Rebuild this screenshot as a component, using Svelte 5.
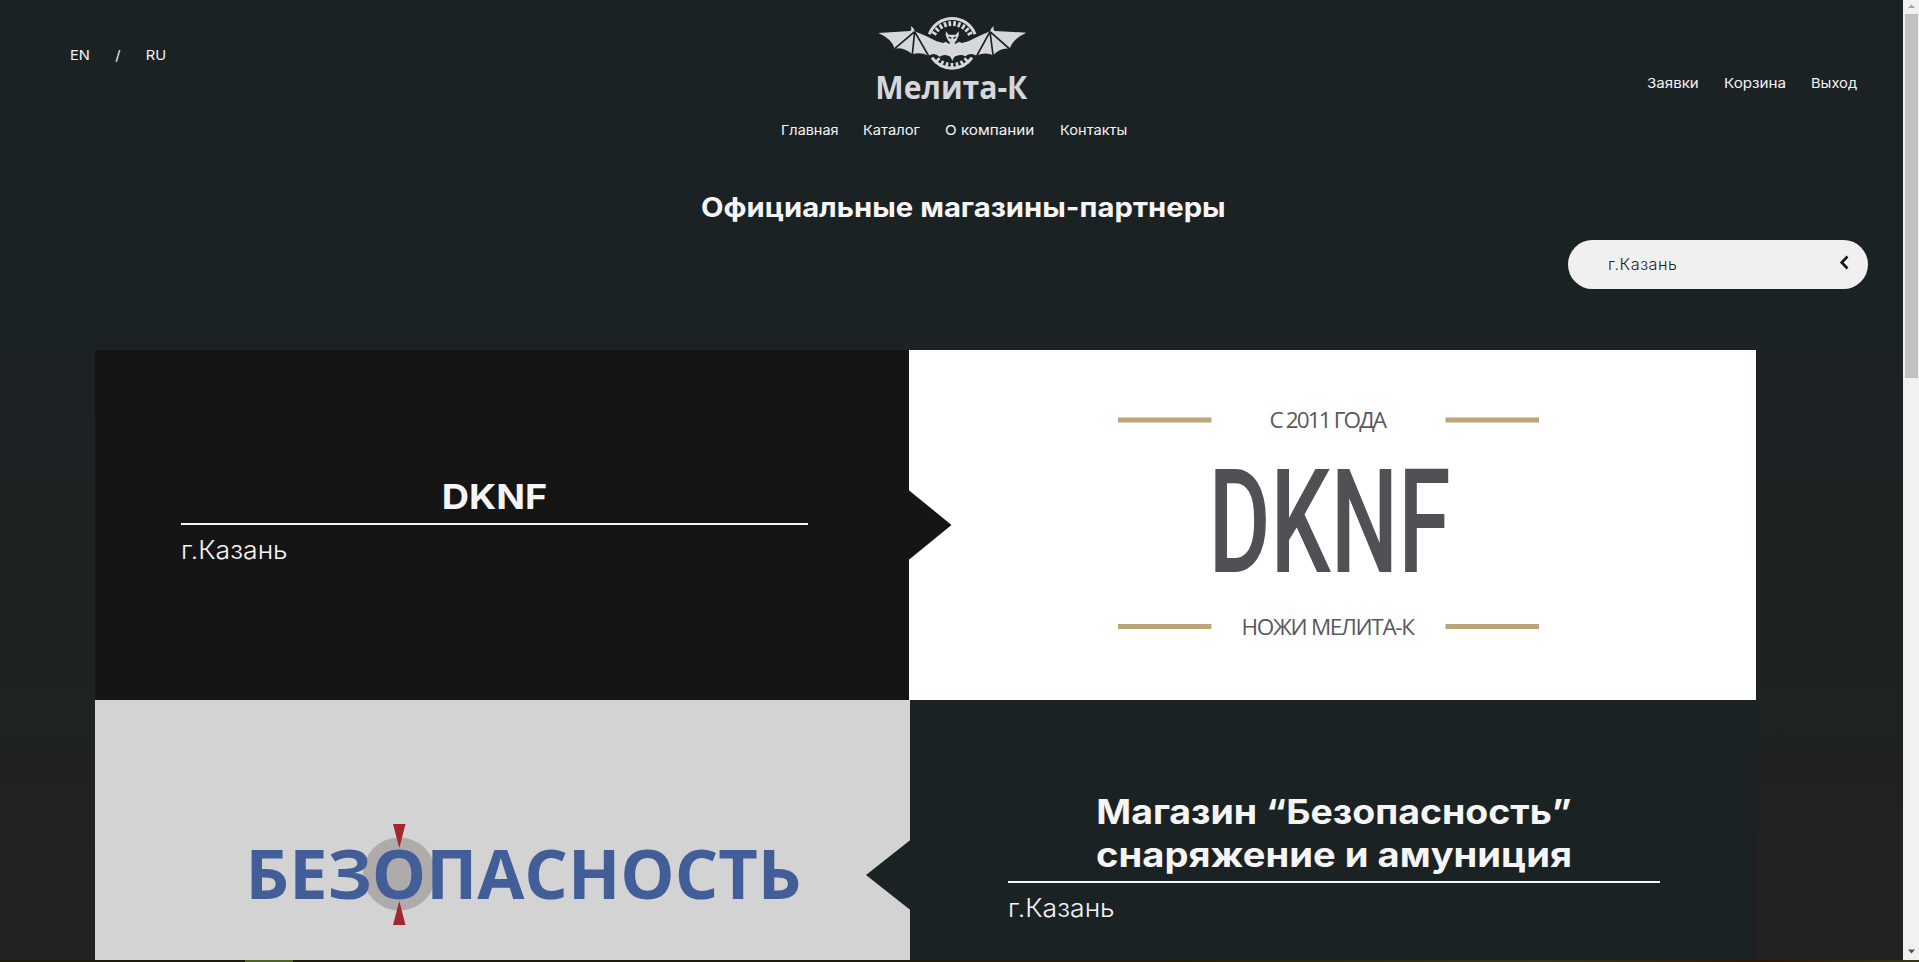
<script>
  const pages = [
    { label: 'Главная', w: 57, s: 1.06 },
    { label: 'Каталог', w: 56, s: 1.08 },
    { label: 'О компании', w: 89.5, s: 1.12 },
    { label: 'Контакты', w: 68, s: 1.075 }
  ];
  const account = [
    { label: 'Заявки', w: 52, s: 1.11 },
    { label: 'Корзина', w: 62.5, s: 1.12 },
    { label: 'Выход', w: 46, s: 1.08 }
  ];
  const teeth = [-62, -49, -36, -23, -10, 3, 16, 29, 42, 55];
</script>

<div class="page">
  <header>
    <div class="lang"><span>EN</span><span>/</span><span>RU</span></div>
    <div class="brand">
      <svg class="logo" viewBox="0 0 570 315" width="190" height="105">
        <g transform="translate(0 2)">
          <g fill="none" stroke="#d6d7da">
            <path d="M208 86A73 73 0 0 1 345 86" stroke-width="9" />
            <path d="M216 156A73 73 0 0 0 336 156" stroke-width="9" />
          </g>
          <g fill="#d6d7da">
            {#each teeth as a}
              <rect x="272" y="46" width="8" height="15" transform="rotate({a + 4} 276 116)" />
            {/each}
            {#each [-44, -30, -16, -2, 12, 26, 40] as a}
              <rect x="272" y="172" width="8" height="15" transform="rotate({a + 2} 276 116)" />
            {/each}
            <path d="M55 82L151 76Q156 72 152 62Q162 66 164 77Q200 91 230 107L249 112Q260 106 266 109L288 109Q294 106 306 112L325 107Q356 91 390 77Q392 66 402 61Q398 72 404 76L499 81Q459 99 449 130Q427 124 399 148Q374 138 350 150Q331 139 316 152Q303 144 289 151Q283 150 277 166Q271 150 266 151Q252 144 239 153Q223 139 206 150Q180 138 157 146Q130 124 104 129Q95 99 55 82Z" />
            <path d="M258 77L266 87H288L295 77Q299 89 293 96Q290 107 282 111H272Q264 107 260 96Q255 89 258 77Z" />
          </g>
          <path d="M164 78L104 129M164 78L157 146M164 78L206 151M390 78L449 130M390 78L399 148M390 78L350 151" stroke="#1b2224" stroke-width="5" fill="none" />
          <path d="M266 94L274 98M288 94L280 98M259 108L270 113M295 108L284 113" stroke="#1b2224" stroke-width="4" />
        </g>
        <text x="46" y="281" textLength="456" lengthAdjust="spacingAndGlyphs" font-size="94" font-weight="700">Мелита-К</text>
      </svg>
      <nav>
        {#each pages as p}<a style:width="{p.w}px"><span style:transform="scaleX({p.s})">{p.label}</span></a>{/each}
      </nav>
    </div>
    <nav class="account">
      {#each account as p}<a style:width="{p.w}px"><span style:transform="scaleX({p.s})">{p.label}</span></a>{/each}
    </nav>
  </header>

  <h1>Официальные магазины-партнеры</h1>

  <div class="filter">
    <div class="select">
      <span>г.Казань</span>
      <svg width="10" height="15" viewBox="0 0 10 15"><path d="M8.500 1.5L2.700 7.5L8.500 13.5" fill="none" stroke="#151515" stroke-width="2.6" /></svg>
    </div>
  </div>

  <main>
    <section class="row first">
      <div class="info dark">
        <h2 class="short">DKNF</h2>
        <hr />
        <p>г.Казань</p>
        <i class="arrow"></i>
      </div>
      <div class="picture white">
        <svg width="847" height="350" viewBox="909 350 847 350">
          <g fill="#bca678">
            <rect x="1118" y="417.5" width="93.500" height="5" />
            <rect x="1445.500" y="417.5" width="93.500" height="5" />
            <rect x="1118" y="624" width="93.500" height="5" />
            <rect x="1445.500" y="624" width="93.500" height="5" />
          </g>
          <g class="caption">
            <text x="1269.500" y="428" textLength="117.500" lengthAdjust="spacing">С 2011 ГОДА</text>
            <text x="1241.500" y="635" textLength="173.500" lengthAdjust="spacing">НОЖИ МЕЛИТА-К</text>
          </g>
          <text class="dknf" x="1208.500" y="571.5" textLength="242" lengthAdjust="spacingAndGlyphs">DKNF</text>
        </svg>
      </div>
    </section>
    <section class="row second">
      <div class="picture grey">
        <svg width="815" height="260" viewBox="95 700 815 260">
          <circle cx="399.300" cy="874" r="36.500" fill="#afabab" />
          <text class="safety" x="245.500" y="899" textLength="556" lengthAdjust="spacingAndGlyphs">БЕЗОПАСНОСТЬ</text>
          <path d="M393 824H405.500L399.300 848ZM393 925H405.500L399.300 901Z" fill="#a3282b" />
        </svg>
      </div>
      <div class="info slate">
        <h2 class="l1">Магазин “Безопасность”</h2>
        <h2 class="l2">снаряжение и амуниция</h2>
        <hr />
        <p>г.Казань</p>
        <i class="arrow"></i>
      </div>
    </section>
  </main>

  <div class="scrollbar">
    <svg class="up" width="16" height="14" viewBox="0 0 16 14"><path d="M5 8L8.500 4.500L12 8Z" fill="#a3a3a3" /></svg>
    <div class="thumb"></div>
    <svg class="down" width="16" height="15" viewBox="0 0 16 15"><path d="M5 4.500L8.500 8.500L12 4.500Z" fill="#505050" /></svg>
  </div>
  <div class="edge"><i></i></div>
</div>

<style>
  :global(body) { margin: 0; overflow: hidden; }
  .page {
    position: relative;
    width: 1919px;
    height: 962px;
    overflow: hidden;
    background: linear-gradient(#1b2224 0, #1c2224 380px, #222221 960px);
    color: #f5f5f5;
    font-family: Inter, "Noto Sans", sans-serif;
  }
  header {
    display: grid;
    grid-template-columns: 780.500px 1fr 256px;
    height: 182px;
    font-size: 13.6px;
    font-weight: 400;
  }
  .lang { display: flex; gap: 23.400px; padding: 47px 0 0 70px; line-height: 17px; transform: scaleX(1.08); transform-origin: 70px 0; }
  .logo { display: block; margin: 5px 0 0 79.500px; }
  .logo text { fill: #d6d7da; font-family: "Open Sans", sans-serif; }
  nav { display: flex; gap: 25.800px; line-height: 17px; margin-top: 12px; white-space: nowrap; }
  nav a { flex: none; }
  nav span { display: inline-block; transform-origin: 0 0; }
  .account { margin-top: 75px; margin-left: -16.500px; gap: 25px; }
  h1 {
    margin: 0 0 0 701px;
    height: 58px;
    width: max-content;
    padding-top: 9px;
    box-sizing: border-box;
    font-size: 27px;
    line-height: 34px;
    font-weight: 700;
    white-space: nowrap;
    transform: scaleX(1.083);
    transform-origin: 0 0;
  }
  .filter { display: flex; height: 110px; padding-left: 1568px; align-items: flex-start; }
  .select {
    box-sizing: border-box;
    display: flex;
    justify-content: space-between;
    width: 300px;
    height: 49px;
    padding: 15px 19px 0 40px;
    border-radius: 25px;
    background: #f0f0f0;
    color: #222;
    font-size: 15.400px;
    font-weight: 300;
    line-height: 20px;
    letter-spacing: .5px;
  }
  .select span { transform: scaleX(1.055); transform-origin: 0 0; }
  main { margin-left: 95px; width: 1661px; }
  .row { display: grid; }
  .first { grid-template-columns: 814px 847px; height: 350px; }
  .second { grid-template-columns: 815px 846px; height: 260px; }
  .info { position: relative; box-sizing: border-box; }
  .dark { background: #151515; padding: 125px 101px 0 86px; }
  .slate { background: #1b2224; padding: 90px 96px 0 98px; }
  .white { background: #fff; }
  .grey { background: #d3d3d3; }
  .picture svg { display: block; }
  h2 { margin: 0; text-align: center; font-size: 34.700px; line-height: 43px; font-weight: 700; white-space: nowrap; }
  .short { padding-bottom: 5px; transform: scaleX(1.09); }
  .l1 { transform: scaleX(1.08); }
  .l2 { padding-bottom: 5px; transform: scaleX(1.1); }
  hr { margin: 0; border: 0; height: 2px; background: #f5f5f5; }
  p { margin: 9px 0 0; width: max-content; font-size: 25px; line-height: 32px; font-weight: 300; transform: scaleX(1.062); transform-origin: 0 0; }
  .arrow { position: absolute; width: 44px; height: 71px; top: 139.500px; }
  .dark .arrow { left: 813px; width: 43.500px; background: #151515; clip-path: polygon(0 0, 100% 50%, 0 100%); }
  .slate .arrow { left: -44px; width: 45px; background: #1b2224; clip-path: polygon(100% 0, 0 50%, 100% 100%); }
  .caption text { fill: #58595c; font: 22.500px "Open Sans", sans-serif; }
  .dknf { fill: #505154; font: 500 144px Roboto, sans-serif; }
  .safety { fill: #425e98; font: 700 68px "Open Sans", sans-serif; }
  .scrollbar { position: absolute; right: 0; top: 0; width: 16px; height: 960px; background: #f1f1f1; display: flex; flex-direction: column; }
  .thumb { width: 13px; height: 364px; margin-left: 2px; background: #c1c1c1; }
  .down { margin-top: auto; }
  .edge { position: absolute; left: 0; right: 0; bottom: 0; height: 2px; background: linear-gradient(90deg, #1d1b0c, #211c0b 60%, #34361a 80%, #2a1606 92%, #34361a); }
  .edge i { display: block; margin-left: 245px; width: 48px; height: 2px; background: #4f6228; }
</style>
